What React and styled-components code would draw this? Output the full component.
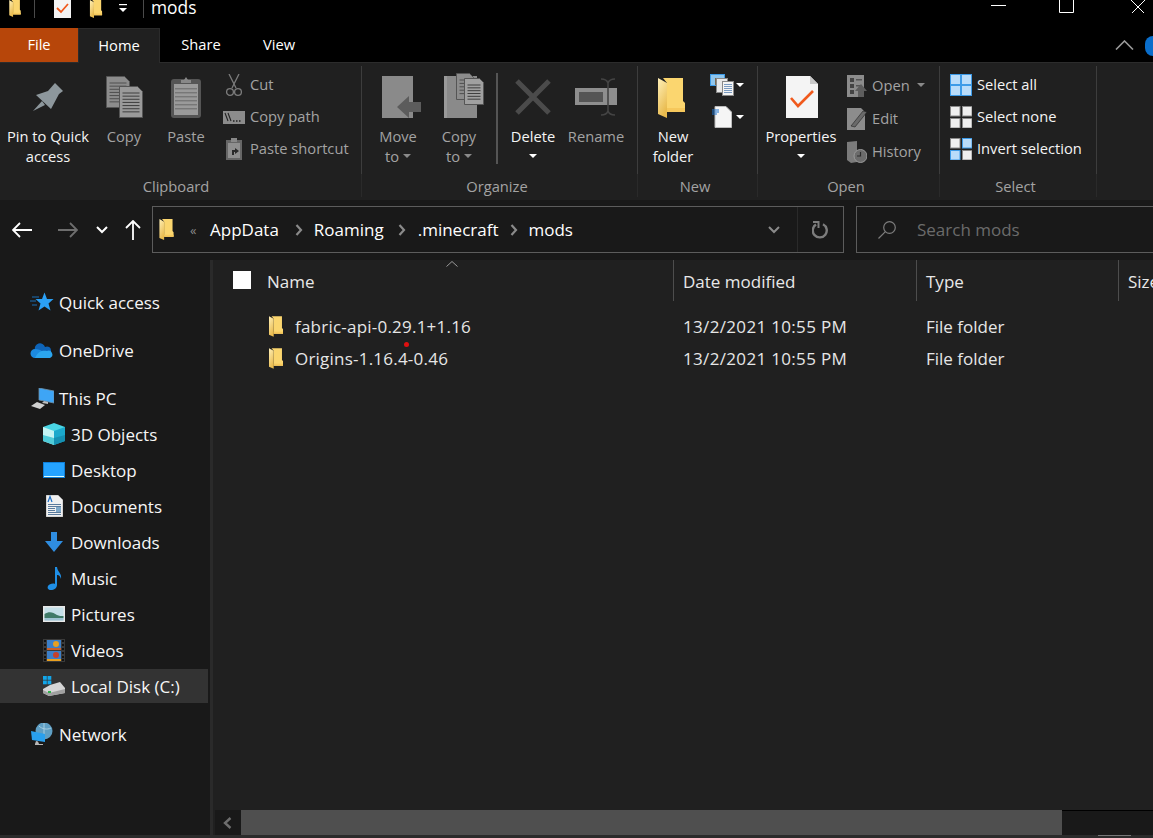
import React, { useId } from "react";
import styled, { createGlobalStyle } from "styled-components";

const Global = createGlobalStyle`
  html, body { margin: 0; padding: 0; background: #000; }
  #root { width: 1153px; height: 838px; overflow: hidden; }
  * { box-sizing: border-box; }
`;

const Window = styled.div`
  width: 1153px; height: 838px; display: flex; flex-direction: column; overflow: hidden;
  background: #000; color: #fff;
  font-family: "Open Sans", "Noto Sans", sans-serif; font-size: 17px;
`;

/* ---------- title + tabs ---------- */
const TitleBar = styled.div`height: 28px; display: flex; align-items: flex-start; flex: none; overflow: hidden;`;
const QuickTool = styled.div`
  width: ${p => p.$w}px; height: 20px; display: flex; justify-content: center; align-items: flex-start; flex: none;
`;
const TitleSep = styled.div`width: 1px; height: 18px; background: #4a4a4a; flex: none; margin-left: ${p => p.$ml || 0}px;`;
const TitleText = styled.div`font-size: 17.4px; line-height: 14px; flex: 1; margin-left: 7px;`;
const WinControls = styled.div`display: flex; flex: none; align-items: flex-start;`;
const WinBtn = styled.div`width: 16px; margin-right: ${p => p.$mr}px; display: flex; justify-content: center;`;

const TabBar = styled.div`height: 34px; display: flex; flex: none; font-size: 14.7px;`;
const Tab = styled.div`
  width: ${p => p.$w}px; display: flex; align-items: center; justify-content: center;
  padding-bottom: ${p => (p.$active ? 3 : 2)}px;
  background: ${p => (p.$file ? "#b7460a" : p.$active ? "#202020" : "transparent")};
  border: ${p => (p.$active ? "1px solid #2b2b2b" : "none")}; border-bottom: none;
  height: ${p => (p.$active ? 35 : 34)}px; z-index: 1;
`;
const TabSpacer = styled.div`flex: 1;`;
const Collapse = styled.div`width: 37px; display: flex; align-items: center; padding-left: 7px;`;
const HelpDot = styled.div`width: 8px; height: 20px; margin-top: 8px; background: #0a6ecb; border-radius: 10px 0 0 10px; flex: none;`;

/* ---------- ribbon ---------- */
const Ribbon = styled.div`
  height: 138px; flex: none; display: flex; background: #202020; border-top: 1px solid #2c2c2c; padding: 3px 0 3px;
  font-size: 14.7px;
`;
const Group = styled.div`width: ${p => p.$w}px; flex: none; display: flex; flex-direction: column;`;
const GroupBody = styled.div`
  height: 108px; flex: none; padding: 3px 0 0 ${p => p.$pl || 0}px; display: flex; border-right: 1px solid #3d3d3d;
`;
const GroupLabel = styled.div`
  flex: 1; min-height: 0; text-align: center; line-height: 22px; color: #a3a3a3; border-right: 1px solid #2a2a2a;
  padding: 1px ${p => p.$pr || 5}px 0 0;
`;
const BigButton = styled.div`
  width: ${p => p.$w}px; flex: none; display: flex; flex-direction: column; align-items: center;
  margin-right: ${p => p.$mr || 0}px; color: ${p => (p.$dim ? "#a3a3a3" : "#f4f4f4")}; line-height: 20px; text-align: center;
`;
const BigIcon = styled.div`
  height: 57px; display: flex; align-items: flex-end; justify-content: center;
  padding-bottom: ${p => p.$pb ?? 8}px; margin-left: ${p => p.$shift || 0}px;
`;
const Line = styled.div`white-space: nowrap; display: flex; align-items: center; justify-content: center; gap: 4px; min-height: 20px;`;
const Caret = styled.span`
  display: inline-block; width: 0; height: 0; border-left: 4px solid transparent; border-right: 4px solid transparent;
  border-top: 4px solid ${p => p.$c || "#fff"}; flex: none;
`;
const VDivider = styled.div`width: 2px; height: 91px; background: #555; margin: 4px 7px 0 7px; flex: none;`;
const SmallCol = styled.div`display: flex; flex-direction: column; margin-left: ${p => p.$ml || 0}px; flex: none;`;
const SmallRow = styled.div`
  height: ${p => p.$h || 32}px; display: flex; align-items: center; white-space: nowrap;
  color: ${p => (p.$dim ? "#a3a3a3" : "#f4f4f4")};
`;
const SmallIcon = styled.div`
  width: ${p => p.$w || 22}px; margin-right: ${p => p.$mr || 5}px; display: flex; justify-content: center; flex: none;
`;
const RowText = styled.span`display: flex; align-items: center; margin-top: -2px;`;
const Rest = styled.div`flex: 1;`;

/* ---------- nav bar ---------- */
const NavBar = styled.div`height: 60px; flex: none; background: #191919; display: flex; align-items: center; padding-bottom: 1px;`;
const NavBtn = styled.div`width: ${p => p.$w}px; display: flex; justify-content: center; flex: none; margin-left: ${p => p.$ml || 0}px;`;
const AddressBox = styled.div`
  width: 692px; height: 47px; margin-left: 11px; flex: none; border: 1px solid #5c5c5c; display: flex; align-items: center;
  padding-left: 6px;
`;
const Crumb = styled.span`margin-right: ${p => p.$mr}px; white-space: nowrap;`;
const CrumbChevron = styled.span`display: flex; margin-right: ${p => p.$mr}px; flex: none;`;
const Chevrons = styled.span`color: #8a8a8a; font-size: 13px; width: 20px; margin-left: 16px; flex: none;`;
const AddressEnd = styled.div`margin-left: auto; display: flex; height: 100%; align-items: center;`;
const AddressBtn = styled.div`
  height: 100%; width: ${p => p.$w}px; display: flex; align-items: center; justify-content: center;
  border-left: ${p => (p.$sep ? "1px solid #2a2a2a" : "none")};
`;
const SearchBox = styled.div`
  flex: 1; height: 47px; margin-left: 12px; margin-right: -4px; border: 1px solid #5c5c5c; display: flex; align-items: center;
  padding-left: 21px; color: #6b6b6b; gap: 21px;
`;

/* ---------- body ---------- */
const Body = styled.div`flex: 1; display: flex; min-height: 0;`;
const Sidebar = styled.div`width: 210px; flex: none; background: #191919; padding-top: 25px;`;
const NavGroup = styled.div`display: flex; flex-direction: column; gap: 2px; margin-bottom: 14px;`;
const NavRow = styled.div`
  width: 208px; height: 34px; display: flex; align-items: center;
  padding-left: ${p => (p.$sub ? 42 : 30)}px; background: ${p => (p.$selected ? "#333" : "transparent")}; color: #f6f6f6;
`;
const NavIcon = styled.div`width: 24px; margin-right: 5px; display: flex; justify-content: center; flex: none;`;
const Splitter = styled.div`width: 3px; flex: none; background: #2a2a2a;`;
const Main = styled.div`flex: 1; background: #202020; display: flex; flex-direction: column; min-width: 0; position: relative;`;
const HeaderRow = styled.div`
  height: 41px; display: grid; grid-template-columns: 460px 243px 202px 1fr; flex: none; position: relative; color: #e8e8e8;
`;
const HCell = styled.div`
  display: flex; align-items: center; padding-left: ${p => (p.$first ? 20 : 9)}px; padding-top: 2px; overflow: hidden;
  border-left: ${p => (p.$first ? "none" : "1px solid #4d4d4d")}; white-space: nowrap;
`;
const CheckBox = styled.div`width: 18px; height: 18px; background: #fff; margin-right: 16px; flex: none; margin-bottom: 3px;`;
const SortCaret = styled.svg`position: absolute; left: 233px; top: 1px;`;
const Rows = styled.div`flex: 1; padding-top: 9px;`;
const FileRow = styled.div`height: 32px; display: grid; grid-template-columns: 460px 243px 202px 1fr; color: #e6e6e6; align-items: center;`;
const FCell = styled.div`
  padding-left: ${p => (p.$first ? 56 : 10)}px; display: flex; align-items: center; white-space: nowrap;
  letter-spacing: ${p => p.$ls || 0}px;
`;
const FileIcon = styled.span`display: flex; margin-right: 12px;`;
const RedDot = styled.div`position: absolute; left: 191px; top: 82px; width: 5px; height: 5px; border-radius: 50%; background: #e01010;`;
const HScroll = styled.div`height: 25px; flex: none; display: flex; margin-left: 2px; background: #191919;`;
const ScrollArrow = styled.div`width: 26px; display: flex; align-items: center; justify-content: center; flex: none; padding-right: 1px;`;
const ScrollThumb = styled.div`width: 821px; background: #4f4f4f; flex: none;`;
const ScrollTrack = styled.div`flex: 1; border-top: 1px solid #000;`;
const StatusStrip = styled.div`height: 3px; flex: none; background: #2b2b2b; display: flex; align-items: flex-start;`;
const StripMark = styled.div`margin-left: 1098px; width: 33px; height: 1px; background: #777;`;

/* ---------- icons ---------- */
const Folder = ({ w = 27, h = 40 }) => {
  const id = useId();
  return (
    <svg width={w} height={h} viewBox="0 0 27 40">
      <defs>
        <linearGradient id={id} x1="0" y1="0" x2="0.4" y2="1">
          <stop offset="0" stopColor="#fff0b8" />
          <stop offset="1" stopColor="#e9bb4e" />
        </linearGradient>
      </defs>
      <path d="M5 0H25V23L27 25V34H9V5Z" fill="#fbd66f" />
      <path d="M9 34H27V30H9Z" fill="#f6c85c" />
      <path d="M0 0L9 5V40L0 36Z" fill={`url(#${id})`} />
    </svg>
  );
};
const PinIcon = () => (
  <svg width="31" height="30" viewBox="0 0 31 30">
    <path d="M22 1L30 9L26 12L18 27L3 13L15 9Z" fill="#8d979c" />
    <path d="M9 19L0 29L12 23Z" fill="#8d979c" />
  </svg>
);
const Sheet = ({ x, y, w, h, fill = "#8f8f8f", line = "#4f4f4f", n = 6, fold = 5 }) => (
  <g>
    <path d={`M${x} ${y}H${x + w - fold}L${x + w} ${y + fold}V${y + h}H${x}Z`} fill={fill} stroke="#555" strokeWidth="1" />
    {Array.from({ length: n }).map((_, i) => (
      <rect key={i} x={x + 3} y={y + 6 + i * ((h - 9) / n)} width={w - 6} height="1" fill={line} />
    ))}
  </g>
);
const CopyIcon = () => (
  <svg width="37" height="42" viewBox="0 0 37 42">
    <Sheet x={0.5} y={0.5} w={23} h={31} fill="#8c8c8c" n={7} />
    <Sheet x={13.5} y={10.5} w={23} h={31} fill="#9a9a9a" line="#3f3f3f" n={7} />
  </svg>
);
const PasteIcon = () => (
  <svg width="30" height="42" viewBox="0 0 30 42">
    <rect x="0" y="3" width="30" height="39" rx="3" fill="#555" />
    <rect x="3" y="8" width="24" height="31" fill="#9a9a9a" />
    {[12, 16, 20, 24, 28, 32].map(y => <rect key={y} x="4" y={y} width="22" height="1.4" fill="#777" />)}
    <path d="M10 7V4H13L15 1L17 4H20V7Z" fill="#888" />
  </svg>
);
const ScissorsIcon = () => (
  <svg width="16" height="23" viewBox="0 0 16 23" fill="none" stroke="#7c7c7c" strokeWidth="1.3">
    <path d="M3 0L10 14M13 0L6 14" />
    <circle cx="4" cy="18" r="3.4" /><circle cx="12" cy="18" r="3.4" />
  </svg>
);
const CopyPathIcon = () => (
  <svg width="22" height="13" viewBox="0 0 22 13">
    <rect width="22" height="13" fill="#8c8c8c" />
    <path d="M2 2L5 10M5 2L8 10" stroke="#222" strokeWidth="1.1" />
    <path d="M10 10h1.5M13 10h1.5M16 10h1.5" stroke="#222" strokeWidth="1.3" />
  </svg>
);
const PasteShortcutIcon = () => (
  <svg width="16" height="22" viewBox="0 0 16 22">
    <rect y="2" width="16" height="20" fill="#666" />
    <rect x="2" y="5" width="12" height="15" fill="#8f8f8f" />
    <path d="M5 0H11V4H5Z" fill="#888" />
    <path d="M6 17V12H9V10L13 13L9 16V14H8V17Z" fill="#2a2a2a" />
  </svg>
);
const MoveToIcon = () => (
  <svg width="40" height="42" viewBox="0 0 40 42">
    <rect x="0" y="0" width="31" height="42" fill="#8a8a8a" />
    <path d="M15 31L27 20V26H39V36H27V42Z" fill="#5c5c5c" />
  </svg>
);
const CopyToIcon = () => (
  <svg width="40" height="45" viewBox="0 0 40 45">
    <rect x="0" y="3" width="33" height="42" fill="#8a8a8a" />
    <rect x="0" y="3" width="3" height="42" fill="#9a9a9a" />
    <Sheet x={12.5} y={0.5} w={17} h={26} fill="#8c8c8c" n={5} fold={4} />
    <Sheet x={20.5} y={5.5} w={19} h={26} fill="#a0a0a0" line="#3f3f3f" n={6} fold={4} />
  </svg>
);
const DeleteIcon = () => (
  <svg width="36" height="36" viewBox="0 0 36 36">
    <path d="M2 2L34 34M34 2L2 34" stroke="#4b4b4b" strokeWidth="5" />
  </svg>
);
const RenameIcon = () => (
  <svg width="42" height="38" viewBox="0 0 42 38">
    <rect x="0" y="10" width="42" height="17" fill="#8e8e8e" />
    <rect x="4" y="14" width="24" height="10" fill="#555" />
    <path d="M26 1C30 1 32 2 33 5V33C32 36 30 37 26 37M40 1C36 1 34 2 33 5M33 33C34 36 36 37 40 37" fill="none" stroke="#444" strokeWidth="1.6" />
  </svg>
);
const NewItemIcon = () => (
  <svg width="24" height="22" viewBox="0 0 24 22">
    <rect x="0.5" y="0.5" width="14" height="11" fill="#8fc6ee" stroke="#3e9be6" />
    <rect x="5" y="4" width="5" height="7" fill="#7a6a52" />
    <rect x="6.5" y="4.5" width="11" height="14" fill="#e8e8e8" stroke="#888" />
    <rect x="12.5" y="7.5" width="11" height="14" fill="#f4f4f4" stroke="#888" />
    {[10, 12, 14, 16, 18].map(y => <rect key={y} x="14" y={y} width="8" height="1" fill="#7a9ac0" />)}
  </svg>
);
const EasyIcon = () => (
  <svg width="20" height="22" viewBox="0 0 20 22">
    <path d="M3 0.5H14L19.5 6V21.5H3Z" fill="#f5f5f5" stroke="#bbb" />
    <path d="M0 4H7M0 6H7M0 8H5" stroke="#1e74d0" strokeWidth="1" />
  </svg>
);
const PropertiesIcon = () => (
  <svg width="32" height="42" viewBox="0 0 32 42">
    <path d="M0 0H24L32 8V42H0Z" fill="#f4f4f4" />
    <path d="M24 0L32 8H24Z" fill="#c9c9c9" />
    <path d="M5 22L12 30L27 15" fill="none" stroke="#f0591c" strokeWidth="2.6" />
  </svg>
);
const OpenIcon = () => (
  <svg width="20" height="22" viewBox="0 0 20 22">
    <rect width="17" height="22" fill="#8c8c8c" />
    {[3, 9, 15].map(y => <rect key={y} x="3" y={y} width="4" height="4" fill="#444" />)}
    {[4, 10].map(y => <rect key={y} x="9" y={y} width="6" height="1.5" fill="#555" />)}
    <path d="M14 9L20 16H17V22H11V16H8Z" fill="#5e5e5e" />
  </svg>
);
const EditIcon = () => (
  <svg width="20" height="22" viewBox="0 0 20 22">
    <path d="M0 0H14L18 4V22H0Z" fill="#8c8c8c" />
    <path d="M4 18L16 3L20 4L8 19Z" fill="#6a6a6a" stroke="#202020" strokeWidth="0.6" />
  </svg>
);
const HistoryIcon = () => (
  <svg width="20" height="22" viewBox="0 0 20 22">
    <path d="M0 1L10 0V21L4 22L0 19Z" fill="#7b7b7b" />
    <circle cx="13.5" cy="15" r="6.5" fill="#6c6c6c" stroke="#9a9a9a" strokeWidth="1" />
    <path d="M13.5 11V15H10" stroke="#2b2b2b" strokeWidth="1.2" fill="none" />
  </svg>
);
const Cells = ({ cells }) => (
  <svg width="22" height="22" viewBox="0 0 22 22">
    {cells.map((c, i) => {
      const x = i % 2 ? 12 : 0, y = i < 2 ? 0 : 12;
      return <rect key={i} x={x + 0.5} y={y + 0.5} width="9.5" height="9.5" fill={c ? "#b9dcfa" : "#efefef"} stroke={c ? "#3d9be8" : "#8a8a8a"} />;
    })}
  </svg>
);
const SelectAllIcon = () => (
  <svg width="22" height="22" viewBox="0 0 22 22">
    <rect width="22" height="22" fill="#3d9be8" />
    {[[1, 1], [12, 1], [1, 12], [12, 12]].map(([x, y]) => <rect key={x + "-" + y} x={x} y={y} width="9" height="9" fill="#b9dcfa" />)}
  </svg>
);

const BackArrow = ({ c = "#fff" }) => (
  <svg width="20" height="16" viewBox="0 0 20 16" fill="none" stroke={c} strokeWidth="1.8"><path d="M20 8H1M8 1L1 8L8 15" /></svg>
);
const ForwardArrow = ({ c = "#6e6e6e" }) => (
  <svg width="20" height="16" viewBox="0 0 20 16" fill="none" stroke={c} strokeWidth="1.8"><path d="M0 8H19M12 1L19 8L12 15" /></svg>
);
const UpArrow = () => (
  <svg width="16" height="20" viewBox="0 0 16 20" fill="none" stroke="#fff" strokeWidth="1.8"><path d="M8 20V1M1 8L8 1L15 8" /></svg>
);
const ChevDown = ({ c = "#fff", w = 12 }) => (
  <svg width={w} height="8" viewBox="0 0 12 8" fill="none" stroke={c} strokeWidth="2"><path d="M1 1L6 6L11 1" /></svg>
);
const ChevRight = () => (
  <svg width="8" height="12" viewBox="0 0 8 12" fill="none" stroke="#8a8a8a" strokeWidth="2.2"><path d="M1.5 1L6 6L1.5 11" /></svg>
);
const Refresh = () => (
  <svg width="17" height="18" viewBox="0 0 17 18" fill="none" stroke="#7d7d7d" strokeWidth="2.4">
    <path d="M11 3.2A7 7 0 1 1 4 3.5" /><path d="M1 1H6.5V7" strokeWidth="2" />
  </svg>
);
const SearchIcon = () => (
  <svg width="18" height="18" viewBox="0 0 18 18" fill="none" stroke="#7d7d7d" strokeWidth="1.2">
    <circle cx="11.5" cy="6.5" r="5.8" /><path d="M7.4 10.6L0.5 17.5" />
  </svg>
);

const StarIcon = () => (
  <svg width="24" height="20" viewBox="0 0 24 20">
    <path d="M14.5 0.5L17 7H23.5L18.5 11.5L20.5 18.5L14.5 14.5L8.5 18.5L10.5 11.5L5.5 7H12Z" fill="#2ba0f5" />
    <path d="M2 5H9M0 9H6M2 13H7" stroke="#1b6fb5" strokeWidth="1" />
  </svg>
);
const CloudIcon = () => (
  <svg width="24" height="15" viewBox="0 0 24 15">
    <path d="M5 7A5 5 0 0 1 15 4A4 4 0 0 1 21 8L7 12Z" fill="#0e64b8" />
    <path d="M5 15A4.5 4.5 0 0 1 5 6C8 6 11 7 13 9L8 15Z" fill="#1c8ae0" />
    <path d="M5 15C8 8 13 7 17 8A3.6 3.6 0 0 1 20 15Z" fill="#2ba5ee" />
  </svg>
);
const ThisPcIcon = () => (
  <svg width="23" height="21" viewBox="0 0 23 21">
    <path d="M8 0L23 3V15L8 12Z" fill="#3ea5f5" stroke="#6c8fa8" strokeWidth="0.8" />
    <path d="M13 13L17 14V16L11 15Z" fill="#bdbdbd" />
    <path d="M6 14L14 17L9 21L0 18Z" fill="#d0d0d0" />
  </svg>
);
const CubeIcon = () => (
  <svg width="22" height="22" viewBox="0 0 22 22">
    <path d="M11 0L22 4V10L11 13L0 10V4Z" fill="#49d5e4" />
    <path d="M0 4L11 8V22L0 18Z" fill="#c3f3f3" />
    <path d="M22 4L11 8V22L22 18Z" fill="#1ba9cc" />
    <path d="M0 12L11 15V22L0 18Z" fill="#4fcbd8" />
    <path d="M22 12L11 15V22L22 18Z" fill="#1590b2" />
  </svg>
);
const DesktopIcon = () => (
  <svg width="22" height="16" viewBox="0 0 22 16">
    <rect width="22" height="16" fill="#0f7fd8" />
    <rect x="1" y="1" width="20" height="13" fill="#25a3ff" />
    <rect x="1" y="14" width="20" height="1" fill="#dff" />
  </svg>
);
const DocumentsIcon = () => (
  <svg width="17" height="22" viewBox="0 0 17 22">
    <path d="M0 0H12L17 5V22H0Z" fill="#f0f0f0" stroke="#999" strokeWidth="0.6" />
    <path d="M2 7L4 1.5L6 7" fill="none" stroke="#1f6fc4" strokeWidth="1.2" />
    {[9, 11, 13, 15, 17, 19].map(y => <rect key={y} x="2" y={y} width={y === 13 || y === 15 ? 7 : 13} height="1" fill="#5a7a9c" />)}
    <rect x="10" y="12" width="5" height="5" fill="#7fa8c8" />
  </svg>
);
const DownloadsIcon = () => (
  <svg width="18" height="20" viewBox="0 0 18 20">
    <path d="M6 0H12V9H18L9 20L0 9H6Z" fill="#2f8de0" />
  </svg>
);
const MusicIcon = () => (
  <svg width="17" height="23" viewBox="0 0 17 23">
    <path d="M9 0H11C11.5 5 16 6 15 12C14 8 12 8 11 8V18C11 21 8 23 5 23C2 23 1 21 2 19C3 17 7 16 9 17Z" fill="#1f8fe6" />
  </svg>
);
const PicturesIcon = () => (
  <svg width="22" height="16" viewBox="0 0 22 16">
    <rect width="22" height="16" fill="#e8e8e8" />
    <rect x="1.5" y="1.5" width="19" height="13" fill="#c4dfe8" />
    <path d="M1.5 8C6 5 10 6 14 9C16 10 18 10 20.5 10V12H1.5Z" fill="#3f7a68" />
    <rect x="1.5" y="12" width="19" height="2.5" fill="#9dc2d2" />
  </svg>
);
const VideosIcon = () => (
  <svg width="22" height="23" viewBox="0 0 22 23">
    <rect width="22" height="23" fill="#3a3a3a" />
    <rect x="4" y="1" width="14" height="10" fill="#3c7fc8" />
    <rect x="4" y="12" width="14" height="10" fill="#3c7fc8" />
    <circle cx="13" cy="5" r="3" fill="#e8a020" /><circle cx="13" cy="16" r="3" fill="#c8402a" />
    <rect x="4" y="9" width="14" height="2" fill="#c8602a" /><rect x="4" y="20" width="14" height="2" fill="#e8a020" />
    {[1, 5, 9, 13, 17, 20].map(y => <g key={y}><rect x="1" y={y} width="2" height="2" fill="#111" /><rect x="19" y={y} width="2" height="2" fill="#111" /></g>)}
  </svg>
);
const DiskIcon = () => (
  <svg width="22" height="20" viewBox="0 0 22 20">
    {[[0, 0], [4.5, 0], [0, 4.5], [4.5, 4.5]].map(([x, y]) => <rect key={x + "-" + y} x={x} y={y} width="3.8" height="3.8" fill="#12a6ea" />)}
    <path d="M7 9L17 6L22 12V17L6 20L0 17V13Z" fill="#d6d6d6" />
    <path d="M0 14L6 17L22 13V17L6 20L0 17Z" fill="#a0a0a0" />
    <rect x="5" y="15" width="3" height="2" fill="#2fb04a" />
  </svg>
);
const NetworkIcon = () => (
  <svg width="22" height="23" viewBox="0 0 22 23">
    <circle cx="13" cy="8" r="8.5" fill="#5f9fc4" />
    <path d="M8 3C11 6 16 7 20 5M13 0V16" stroke="#a8cfe2" strokeWidth="1" fill="none" />
    <path d="M0 8L14 11V19L1 17Z" fill="#29a0ee" />
    <path d="M7 18.5L8 21H12V22H4V21L5 18Z" fill="#b8b8b8" />
  </svg>
);

const sidebar = [
  [["Quick access", <StarIcon />]],
  [["OneDrive", <CloudIcon />]],
  [
    ["This PC", <ThisPcIcon />],
    ["3D Objects", <CubeIcon />, true],
    ["Desktop", <DesktopIcon />, true],
    ["Documents", <DocumentsIcon />, true],
    ["Downloads", <DownloadsIcon />, true],
    ["Music", <MusicIcon />, true],
    ["Pictures", <PicturesIcon />, true],
    ["Videos", <VideosIcon />, true],
    ["Local Disk (C:)", <DiskIcon />, true, true],
  ],
  [["Network", <NetworkIcon />]],
];

const files = ["fabric-api-0.29.1+1.16", "Origins-1.16.4-0.46"];

export default function App() {
  return (
    <Window>
      <Global />
      <TitleBar>
        <QuickTool $w={30}><Folder w={14} h={17} /></QuickTool>
        <TitleSep $ml={4} />
        <QuickTool $w={54}>
          <svg width="17" height="18" viewBox="0 0 17 18">
            <path d="M0 0H17V18H0Z" fill="#f4f4f4" />
            <path d="M3 8L7 12L14 4" fill="none" stroke="#f0591c" strokeWidth="1.8" />
          </svg>
        </QuickTool>
        <QuickTool $w={14}><Folder w={14} h={18} /></QuickTool>
        <QuickTool $w={40}>
          <svg width="10" height="16" viewBox="0 0 10 16"><rect x="1" y="4" width="8" height="1.2" fill="#fff" /><path d="M1 8H9L5 12Z" fill="#fff" /></svg>
        </QuickTool>
        <TitleSep />
        <TitleText>mods</TitleText>
        <WinControls>
          <WinBtn $mr={52}><svg width="15" height="6" viewBox="0 0 15 6"><rect y="5" width="15" height="1" fill="#fff" /></svg></WinBtn>
          <WinBtn $mr={56}><svg width="15" height="13" viewBox="0 0 15 13" fill="none" stroke="#fff"><path d="M0.5 0V12.5H14.5V0" /></svg></WinBtn>
          <WinBtn $mr={7}><svg width="16" height="13" viewBox="0 0 16 13" fill="none" stroke="#fff"><path d="M1 0L14 13M15 0L2 13" /></svg></WinBtn>
        </WinControls>
      </TitleBar>

      <TabBar>
        <Tab $w={78} $file>File</Tab>
        <Tab $w={82} $active>Home</Tab>
        <Tab $w={82}>Share</Tab>
        <Tab $w={74}>View</Tab>
        <TabSpacer />
        <Collapse>
          <svg width="19" height="10" viewBox="0 0 19 10" fill="none" stroke="#9a9a9a" strokeWidth="1.6"><path d="M1 9.5L9.5 1L18 9.5" /></svg>
        </Collapse>
        <HelpDot />
      </TabBar>

      <Ribbon>
        <Group $w={362}>
          <GroupBody>
            <BigButton $w={96}><BigIcon $pb={14}><PinIcon /></BigIcon><Line>Pin to Quick</Line><Line>access</Line></BigButton>
            <BigButton $w={56} $dim><BigIcon $shift={1}><CopyIcon /></BigIcon><Line>Copy</Line></BigButton>
            <BigButton $w={68} $dim><BigIcon><PasteIcon /></BigIcon><Line>Paste</Line></BigButton>
            <SmallCol $ml={3}>
              <SmallRow $dim><SmallIcon><ScissorsIcon /></SmallIcon><RowText>Cut</RowText></SmallRow>
              <SmallRow $dim><SmallIcon><CopyPathIcon /></SmallIcon><RowText>Copy path</RowText></SmallRow>
              <SmallRow $dim><SmallIcon><PasteShortcutIcon /></SmallIcon><RowText>Paste shortcut</RowText></SmallRow>
            </SmallCol>
          </GroupBody>
          <GroupLabel $pr={9}>Clipboard</GroupLabel>
        </Group>
        <Group $w={276}>
          <GroupBody $pl={6}>
            <BigButton $w={60} $mr={1} $dim><BigIcon $shift={7}><MoveToIcon /></BigIcon><Line>Move</Line><Line>to <Caret $c="#8a8a8a" /></Line></BigButton>
            <BigButton $w={60} $dim><BigIcon $shift={10}><CopyToIcon /></BigIcon><Line>Copy</Line><Line>to <Caret $c="#8a8a8a" /></Line></BigButton>
            <VDivider />
            <BigButton $w={56} $mr={2}><BigIcon $pb={11}><DeleteIcon /></BigIcon><Line>Delete</Line><Line><Caret /></Line></BigButton>
            <BigButton $w={66} $dim><BigIcon $pb={10}><RenameIcon /></BigIcon><Line>Rename</Line></BigButton>
          </GroupBody>
          <GroupLabel>Organize</GroupLabel>
        </Group>
        <Group $w={120}>
          <GroupBody $pl={7}>
            <BigButton $w={56}><BigIcon $shift={-3}><Folder /></BigIcon><Line>New</Line><Line>folder</Line></BigButton>
            <SmallCol $ml={9}>
              <SmallRow $h={32}><SmallIcon $w={24} $mr={2}><NewItemIcon /></SmallIcon><Caret /></SmallRow>
              <SmallRow $h={32}><SmallIcon $w={24} $mr={2}><EasyIcon /></SmallIcon><Caret /></SmallRow>
            </SmallCol>
          </GroupBody>
          <GroupLabel>New</GroupLabel>
        </Group>
        <Group $w={182}>
          <GroupBody $pl={5}>
            <BigButton $w={76}><BigIcon $shift={2}><PropertiesIcon /></BigIcon><Line>Properties</Line><Line><Caret /></Line></BigButton>
            <SmallCol $ml={8}>
              <SmallRow $dim $h={33}><SmallIcon $w={20} $mr={5}><OpenIcon /></SmallIcon><RowText>Open&nbsp;&nbsp;<Caret $c="#8a8a8a" /></RowText></SmallRow>
              <SmallRow $dim $h={33}><SmallIcon $w={20} $mr={5}><EditIcon /></SmallIcon><RowText>Edit</RowText></SmallRow>
              <SmallRow $dim $h={33}><SmallIcon $w={20} $mr={5}><HistoryIcon /></SmallIcon><RowText>History</RowText></SmallRow>
            </SmallCol>
          </GroupBody>
          <GroupLabel>Open</GroupLabel>
        </Group>
        <Group $w={157}>
          <GroupBody $pl={10}>
            <SmallCol>
              <SmallRow><SmallIcon><SelectAllIcon /></SmallIcon><RowText>Select all</RowText></SmallRow>
              <SmallRow><SmallIcon><Cells cells={[0, 0, 0, 0]} /></SmallIcon><RowText>Select none</RowText></SmallRow>
              <SmallRow><SmallIcon><Cells cells={[0, 1, 1, 0]} /></SmallIcon><RowText>Invert selection</RowText></SmallRow>
            </SmallCol>
          </GroupBody>
          <GroupLabel>Select</GroupLabel>
        </Group>
        <Rest />
      </Ribbon>

      <NavBar>
        <NavBtn $w={20} $ml={12}><BackArrow /></NavBtn>
        <NavBtn $w={20} $ml={26}><ForwardArrow /></NavBtn>
        <NavBtn $w={12} $ml={18}><ChevDown /></NavBtn>
        <NavBtn $w={16} $ml={17}><UpArrow /></NavBtn>
        <AddressBox>
          <Folder w={15} h={21} />
          <Chevrons>«</Chevrons>
          <Crumb $mr={16}>AppData</Crumb><CrumbChevron $mr={11}><ChevRight /></CrumbChevron>
          <Crumb $mr={14}>Roaming</Crumb><CrumbChevron $mr={12}><ChevRight /></CrumbChevron>
          <Crumb $mr={11}>.minecraft</Crumb><CrumbChevron $mr={11}><ChevRight /></CrumbChevron>
          <Crumb $mr={0}>mods</Crumb>
          <AddressEnd>
            <AddressBtn $w={46}><ChevDown c="#8a8a8a" w={14} /></AddressBtn>
            <AddressBtn $w={46} $sep><Refresh /></AddressBtn>
          </AddressEnd>
        </AddressBox>
        <SearchBox><SearchIcon />Search mods</SearchBox>
      </NavBar>

      <Body>
        <Sidebar>
          {sidebar.map((group, i) => (
            <NavGroup key={i}>
              {group.map(([label, icon, sub, selected]) => (
                <NavRow key={label} $sub={sub} $selected={selected}>
                  <NavIcon>{icon}</NavIcon>{label}
                </NavRow>
              ))}
            </NavGroup>
          ))}
        </Sidebar>
        <Splitter />
        <Main>
          <HeaderRow>
            <HCell $first><CheckBox />Name</HCell>
            <HCell>Date modified</HCell>
            <HCell>Type</HCell>
            <HCell>Size</HCell>
            <SortCaret width="12" height="6" viewBox="0 0 12 6" fill="none" stroke="#9a9a9a"><path d="M0.5 5.5L6 0.5L11.5 5.5" /></SortCaret>
          </HeaderRow>
          <Rows>
            {files.map(name => (
              <FileRow key={name}>
                <FCell $first $ls={0.22}><FileIcon><Folder w={14} h={21} /></FileIcon>{name}</FCell>
                <FCell $ls={0.33}>13/2/2021 10:55 PM</FCell>
                <FCell>File folder</FCell>
                <FCell />
              </FileRow>
            ))}
          </Rows>
          <RedDot />
          <HScroll>
            <ScrollArrow>
              <svg width="9" height="12" viewBox="0 0 9 12" fill="none" stroke="#6e6e6e" strokeWidth="2.4"><path d="M7.5 1L2 6L7.5 11" /></svg>
            </ScrollArrow>
            <ScrollThumb />
            <ScrollTrack />
          </HScroll>
        </Main>
      </Body>
      <StatusStrip><StripMark /></StatusStrip>
    </Window>
  );
}
